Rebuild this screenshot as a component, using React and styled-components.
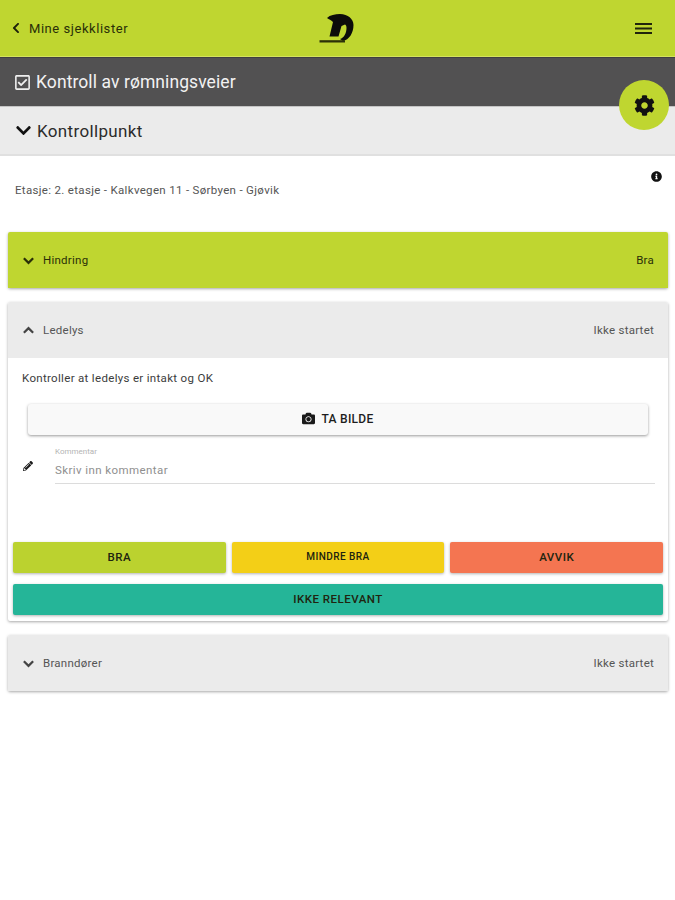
import React from "react";
import styled, { createGlobalStyle } from "styled-components";
import { FaCog, FaCamera, FaPencilAlt, FaInfoCircle, FaChevronDown, FaChevronLeft, FaRegCheckSquare } from "react-icons/fa";

const Global = createGlobalStyle`
  html, body { margin: 0; padding: 0; background: #fff; }
  body { font-family: Roboto, "Liberation Sans", sans-serif; color: #222; }
`;

const Page = styled.div`
  position: relative;
  width: 675px;
  height: 900px;
  overflow: hidden;
  background: #fff;
`;

const TopBar = styled.header`
  height: 56px;
  background: #bfd630;
  border-bottom: 1px solid #d4e45e;
  display: grid;
  grid-template-columns: 1fr auto 1fr;
  align-items: center;
  padding: 0 23px 0 10px;
`;

const BackLink = styled.div`
  display: flex;
  align-items: center;
  gap: 7px;
  font-size: 13px;
  letter-spacing: 0.55px;
  color: #2a3008;
`;

const Logo = styled.svg`
  width: 37px;
  height: 32px;
  display: block;
  margin: 1px 0 0 10px;
`;

const Burger = styled.svg`
  justify-self: end;
  width: 17px;
  height: 13px;
  display: block;
`;

const TitleBar = styled.div`
  height: 49px;
  background: #525152;
  border-top: 1px solid #3f3f3f;
  box-sizing: border-box;
  display: flex;
  align-items: center;
  gap: 5px;
  padding: 0 14px;
  color: #f2f2f2;
  font-size: 17.5px;
  letter-spacing: 0.08px;
`;

const SectionBar = styled.div`
  height: 50px;
  box-sizing: border-box;
  background: #ebebeb;
  border-top: 1px solid #c4c4c4;
  border-bottom: 2px solid #e0e0e0;
  display: flex;
  align-items: center;
  gap: 5px;
  padding: 0 15px;
  font-size: 17px;
  letter-spacing: 0.35px;
  color: #2b2b2b;
`;

const Fab = styled.div`
  position: absolute;
  left: 619px;
  top: 80px;
  width: 50px;
  height: 50px;
  border-radius: 50%;
  background: #bfd630;
  display: flex;
  align-items: center;
  justify-content: center;
`;

const InfoRow = styled.div`
  height: 76px;
  display: flex;
  justify-content: space-between;
  padding: 15px 13px 0 15px;
  box-sizing: border-box;
`;

const InfoText = styled.div`
  font-size: 11.5px;
  letter-spacing: 0.32px;
  color: #555;
  padding-top: 12px;
`;

const Panels = styled.div`
  display: flex;
  flex-direction: column;
  gap: 14px;
  padding: 0 7px 0 8px;
`;

const Panel = styled.section`
  background: #fff;
  border-radius: 2px;
  box-shadow: 0 1px 3px rgba(0, 0, 0, 0.35);
`;

const PanelHead = styled.div`
  height: 56px;
  box-sizing: border-box;
  display: flex;
  align-items: center;
  padding: 0 14px;
  gap: 8px;
  background: ${(p) => (p.$done ? "#bfd630" : "#ebebeb")};
  color: ${(p) => (p.$done ? "#2a3008" : "#555")};
  font-size: 11.5px;
  letter-spacing: 0.25px;
  border-radius: 2px 2px 0 0;
`;

const HeadTitle = styled.span`
  flex: 1;
`;

const PanelBody = styled.div`
  padding: 13px 5px 6px 5px;
`;

const Lead = styled.div`
  font-size: 11.5px;
  letter-spacing: 0.32px;
  color: #3c3c3c;
  padding-left: 9px;
  line-height: 14px;
`;

const PhotoButton = styled.button`
  display: flex;
  align-items: center;
  justify-content: center;
  gap: 6px;
  width: 620px;
  height: 31px;
  margin: 19px 0 0 15px;
  padding: 0 0 2px;
  border: 0;
  border-radius: 3px;
  background: #f9f9f9;
  box-shadow: 0 1px 3px rgba(0, 0, 0, 0.4);
  font: 500 12px Roboto, sans-serif;
  letter-spacing: 0.3px;
  color: #1d1d1d;
`;

const CommentRow = styled.div`
  display: flex;
  align-items: center;
  gap: 22px;
  margin: 12px 0 0 10px;
`;

const Field = styled.div`
  width: 600px;
  height: 37px;
  box-sizing: border-box;
  border-bottom: 1px solid #dcdcdc;
  display: flex;
  flex-direction: column;
`;

const FieldLabel = styled.span`
  font-size: 8px;
  line-height: 10px;
  color: #b4b4b4;
`;

const Placeholder = styled.span`
  font-size: 11.5px;
  letter-spacing: 0.42px;
  line-height: 14px;
  margin-top: 6px;
  color: #8f8f8f;
`;

const Actions = styled.div`
  display: grid;
  grid-template-columns: repeat(3, 1fr);
  gap: 11px 6px;
  margin-top: 58px;
`;

const Action = styled.button`
  height: 31px;
  border: 0;
  border-radius: 2px;
  background: ${(p) => p.$bg};
  grid-column: ${(p) => (p.$wide ? "1 / -1" : "auto")};
  box-shadow: 0 1px 3px rgba(0, 0, 0, 0.3);
  font: 500 ${(p) => p.$size || 11.5}px Roboto, sans-serif;
  letter-spacing: ${(p) => (p.$size ? 0.45 : 0.5)}px;
  color: #20240f;
  padding: 0 0 2px;
`;

const Chevron = ({ up, size = 14, color = "currentColor" }) => (
  <svg width={size} height={size} viewBox="0 0 14 14" fill="none" style={{ flex: "none" }}>
    <path d={up ? "M2 9.5 7 4.5l5 5" : "M2 4.5 7 9.5l5-5"} stroke={color} strokeWidth="2.4" />
  </svg>
);

export default function App() {
  return (
    <Page>
      <Global />
      <TopBar>
        <BackLink>
          <FaChevronLeft size={12} color="#1d210a" />
          Mine sjekklister
        </BackLink>
        <Logo viewBox="0 0 37 32">
          <path
            d="M9 5C12 2 17 1 22 1c8 0 13.500 5 13.500 11 0 8-4.500 15-10.500 16l-3-2c4-1 6.500-6 6.500-11 0-2-.5-3-1.500-3.500L23.500 13l-3 10.500h-9L15 9c-2-2-4-2.500-6-4z"
            fill="#0c0c0a"
          />
          <path d="M1.500 27.200H27v2.300H1.500z" fill="#2c3208" />
        </Logo>
        <Burger viewBox="0 0 17 13">
          <path d="M0 1h17v2H0zM0 5.500h17v2H0zM0 10h17v2H0z" fill="#20240c" />
        </Burger>
      </TopBar>
      <TitleBar>
        <FaRegCheckSquare size={17} color="#efefef" />
        Kontroll av rømningsveier
      </TitleBar>
      <SectionBar>
        <FaChevronDown size={17} color="#111" />
        Kontrollpunkt
      </SectionBar>
      <Fab>
        <FaCog size={21} color="#111" />
      </Fab>
      <InfoRow>
        <InfoText>Etasje: 2. etasje - Kalkvegen 11 - Sørbyen - Gjøvik</InfoText>
        <FaInfoCircle size={11} color="#111" />
      </InfoRow>
      <Panels>
        <Panel>
          <PanelHead $done>
            <Chevron size={13} color="#2a3008" />
            <HeadTitle>Hindring</HeadTitle>
            <span>Bra</span>
          </PanelHead>
        </Panel>
        <Panel>
          <PanelHead>
            <Chevron up size={13} color="#444" />
            <HeadTitle>Ledelys</HeadTitle>
            <span>Ikke startet</span>
          </PanelHead>
          <PanelBody>
            <Lead>Kontroller at ledelys er intakt og OK</Lead>
            <PhotoButton>
              <FaCamera size={13} color="#1a1a1a" />
              TA BILDE
            </PhotoButton>
            <CommentRow>
              <FaPencilAlt size={10} color="#1a1a1a" />
              <Field>
                <FieldLabel>Kommentar</FieldLabel>
                <Placeholder>Skriv inn kommentar</Placeholder>
              </Field>
            </CommentRow>
            <Actions>
              <Action $bg="#bbd22f">BRA</Action>
              <Action $bg="#f3cf17" $size={10}>MINDRE BRA</Action>
              <Action $bg="#f47551">AVVIK</Action>
              <Action $bg="#25b598" $wide>IKKE RELEVANT</Action>
            </Actions>
          </PanelBody>
        </Panel>
        <Panel>
          <PanelHead>
            <Chevron size={13} color="#444" />
            <HeadTitle>Branndører</HeadTitle>
            <span>Ikke startet</span>
          </PanelHead>
        </Panel>
      </Panels>
    </Page>
  );
}
